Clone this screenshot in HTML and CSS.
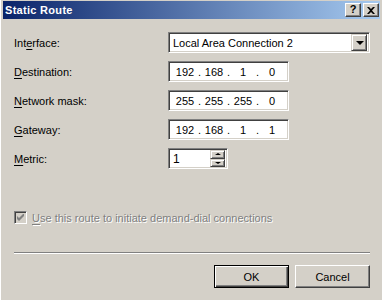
FILE: index.html
```html
<!DOCTYPE html>
<html lang="en">
<head>
  <meta charset="UTF-8">
  <title>Static Route</title>
  <link rel="stylesheet" href="styles.css">
</head>
<body>
  <div class="window">
    <div class="titlebar">
      <span class="title">Static Route</span>
      <div class="caption-btns">
        <span class="cap-btn help">?</span>
        <span class="cap-btn close">
          <svg width="8" height="7" viewBox="0 0 8 7"><path d="M0 0h2l2 2 2-2h2L5 3.5 8 7H6L4 5 2 7H0l3-3.5z" fill="#000"/></svg>
        </span>
      </div>
    </div>

    <div class="content">
      <div class="form">
        <label class="lbl">Int<u>e</u>rface:</label>
        <div class="sunken combo">
          <span class="combo-text">Local Area Connection 2</span>
          <span class="raised drop-btn"><span class="arrow-down big"></span></span>
        </div>

        <label class="lbl"><u>D</u>estination:</label>
        <div class="sunken ip">
          <span class="oct">192</span><span class="dot">.</span><span class="oct">168</span><span class="dot">.</span><span class="oct">1</span><span class="dot">.</span><span class="oct">0</span>
        </div>

        <label class="lbl"><u>N</u>etwork mask:</label>
        <div class="sunken ip">
          <span class="oct">255</span><span class="dot">.</span><span class="oct">255</span><span class="dot">.</span><span class="oct">255</span><span class="dot">.</span><span class="oct">0</span>
        </div>

        <label class="lbl"><u>G</u>ateway:</label>
        <div class="sunken ip">
          <span class="oct">192</span><span class="dot">.</span><span class="oct">168</span><span class="dot">.</span><span class="oct">1</span><span class="dot">.</span><span class="oct">1</span>
        </div>

        <label class="lbl"><u>M</u>etric:</label>
        <div class="sunken metric">
          <span class="metric-text">1</span>
          <span class="spin">
            <span class="raised spin-btn"><span class="arrow-up"></span></span>
            <span class="raised spin-btn"><span class="arrow-down"></span></span>
          </span>
        </div>
      </div>

      <div class="check-row">
        <span class="checkbox">
          <svg width="7" height="7" viewBox="0 0 7 7"><path d="M0 2v3l2 2 5-5V-1L2 4z" fill="#808080"/></svg>
        </span>
        <span class="check-label"><u>U</u>se this route to initiate demand-dial connections</span>
      </div>

      <div class="separator"></div>

      <div class="buttons">
        <button class="btn default">OK</button>
        <button class="btn">Cancel</button>
      </div>
    </div>
  </div>
</body>
</html>
```

FILE: styles.css
```css
body {
  margin: 0;
  background: #d4d0c8;
  font-family: "Liberation Sans", Arial, sans-serif;
  font-size: 11px;
  color: #000;
}

.window {
  width: 382px;
  height: 300px;
  box-sizing: border-box;
  padding: 1px 2px 0 3px;
  background: #d4d0c8;
  box-shadow: inset 2px 0 0 -1px #fff, inset 1px 0 0 #d4d0c8;
  overflow: hidden;
}

/* title bar */
.titlebar {
  height: 18px;
  display: flex;
  align-items: center;
  justify-content: space-between;
  padding: 0 1px 0 2px;
  background: linear-gradient(to right, #0a246a, #a6caf0);
}

.title {
  color: #fff;
  font-weight: bold;
  font-size: 11px;
  letter-spacing: 0.3px;
}

.caption-btns {
  display: flex;
  gap: 2px;
}

.cap-btn {
  width: 16px;
  height: 14px;
  box-sizing: border-box;
  display: flex;
  align-items: center;
  justify-content: center;
  background: #d4d0c8;
  border: 1px solid;
  border-color: #fff #404040 #404040 #fff;
  box-shadow: inset -1px -1px #808080;
}

.cap-btn.help {
  font-weight: bold;
  font-size: 11px;
  line-height: 1;
  padding-bottom: 1px;
}

/* 3d boxes */
.sunken {
  box-sizing: border-box;
  background: #fff;
  border: 1px solid;
  border-color: #808080 #fff #fff #808080;
  box-shadow: inset 1px 1px #404040, inset -1px -1px #d4d0c8;
}

.raised {
  box-sizing: border-box;
  background: #d4d0c8;
  border: 1px solid;
  border-color: #d4d0c8 #404040 #404040 #d4d0c8;
  box-shadow: inset 1px 1px #fff, inset -1px -1px #808080;
  display: flex;
  align-items: center;
  justify-content: center;
}

.arrow-down {
  width: 0;
  height: 0;
  border-left: 3px solid transparent;
  border-right: 3px solid transparent;
  border-top: 2px solid #000;
}

.arrow-down.big {
  border-left-width: 4px;
  border-right-width: 4px;
  border-top-width: 4px;
  margin-left: 1px;
}

.arrow-up {
  width: 0;
  height: 0;
  border-left: 3px solid transparent;
  border-right: 3px solid transparent;
  border-bottom: 2px solid #000;
}

/* form */
.content {
  padding: 0 10px 0 11px;
}

.form {
  display: grid;
  grid-template-columns: 154px auto;
  row-gap: 8px;
  align-items: center;
  margin-top: 13px;
}

.lbl u, .check-label u {
  text-decoration-thickness: 1px;
  text-underline-offset: 2px;
}

.combo {
  width: 202px;
  height: 21px;
  display: flex;
  align-items: center;
  justify-content: space-between;
  padding: 2px;
}

.combo-text {
  padding-left: 2px;
}

.drop-btn {
  width: 16px;
  height: 17px;
}

.ip {
  width: 121px;
  height: 21px;
  display: flex;
  align-items: center;
  padding-left: 4px;
}

.oct {
  width: 24px;
  text-align: center;
}

.dot {
  width: 5px;
  text-align: center;
}

.metric {
  width: 60px;
  height: 21px;
  display: flex;
  align-items: center;
  justify-content: space-between;
  padding: 2px;
}

.metric-text {
  padding-left: 2px;
  font-size: 12px;
}

.spin {
  display: flex;
  flex-direction: column;
  width: 15px;
  height: 17px;
}

.spin-btn {
  flex: 1;
}

/* checkbox */
.check-row {
  display: flex;
  align-items: center;
  margin-top: 42px;
  height: 13px;
}

.checkbox {
  width: 13px;
  height: 13px;
  box-sizing: border-box;
  display: flex;
  align-items: center;
  justify-content: center;
  background: #d4d0c8;
  border: 1px solid;
  border-color: #808080 #fff #fff #808080;
  box-shadow: inset 1px 1px #404040, inset -1px -1px #d4d0c8;
}

.check-label {
  margin-left: 5px;
  color: #808080;
  text-shadow: 1px 1px 0 #fff;
}

.separator {
  margin-top: 28px;
  height: 1px;
  background: #808080;
  border-bottom: 1px solid #fff;
}

.buttons {
  display: flex;
  justify-content: flex-end;
  gap: 6px;
  margin-top: 11px;
}

.btn {
  width: 75px;
  height: 23px;
  box-sizing: border-box;
  font-family: "Liberation Sans", Arial, sans-serif;
  font-size: 11px;
  color: #000;
  background: #d4d0c8;
  border: 1px solid;
  border-color: #fff #404040 #404040 #fff;
  box-shadow: inset -1px -1px #808080;
  padding: 0;
}

.btn.default {
  border-color: #000;
  box-shadow: inset 1px 1px #fff, inset -1px -1px #404040, inset -2px -2px #808080;
}
```
